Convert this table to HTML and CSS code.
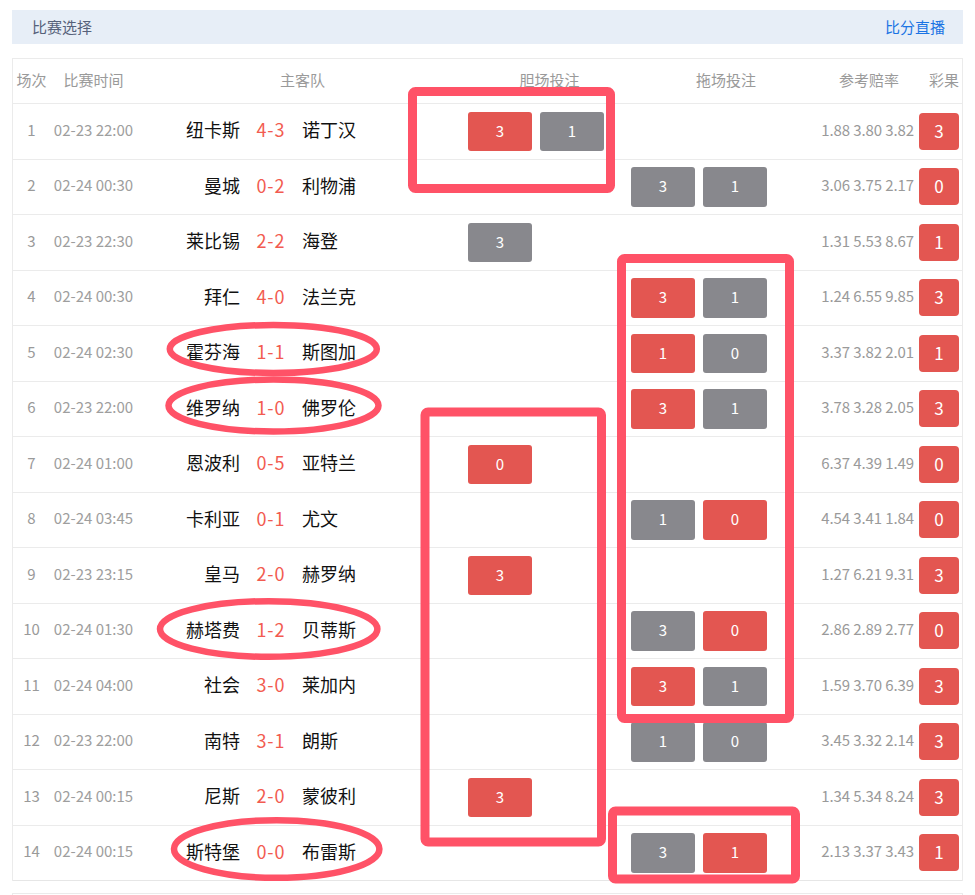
FILE: index.html
```html
<!DOCTYPE html>
<html lang="zh-CN">
<head>
<meta charset="utf-8">
<title>比赛选择</title>
<link rel="stylesheet" href="styles.css">
</head>
<body>
<div class="page">
  <div class="topbar">
    <span class="title">比赛选择</span>
    <a class="live">比分直播</a>
  </div>

  <div class="table">
    <div class="row head">
      <div class="h-no">场次</div>
      <div class="h-time">比赛时间</div>
      <div class="h-teams">主客队</div>
      <div class="h-dan">胆场投注</div>
      <div class="h-tuo">拖场投注</div>
      <div class="h-odds">参考赔率</div>
      <div class="h-res">彩果</div>
    </div>

    <div class="row">
      <div class="c-no">1</div><div class="c-time">02-23 22:00</div>
      <div class="home">纽卡斯</div><div class="score">4-3</div><div class="away">诺丁汉</div>
      <div class="c-dan"><span class="btn red">3</span><span class="btn gray">1</span></div>
      <div class="c-tuo"></div>
      <div class="c-odds">1.88 3.80 3.82</div><div class="c-res"><span class="badge">3</span></div>
    </div>
    <div class="row">
      <div class="c-no">2</div><div class="c-time">02-24 00:30</div>
      <div class="home">曼城</div><div class="score">0-2</div><div class="away">利物浦</div>
      <div class="c-dan"></div>
      <div class="c-tuo"><span class="btn gray">3</span><span class="btn gray">1</span></div>
      <div class="c-odds">3.06 3.75 2.17</div><div class="c-res"><span class="badge">0</span></div>
    </div>
    <div class="row">
      <div class="c-no">3</div><div class="c-time">02-23 22:30</div>
      <div class="home">莱比锡</div><div class="score">2-2</div><div class="away">海登</div>
      <div class="c-dan"><span class="btn gray">3</span></div>
      <div class="c-tuo"></div>
      <div class="c-odds">1.31 5.53 8.67</div><div class="c-res"><span class="badge">1</span></div>
    </div>
    <div class="row">
      <div class="c-no">4</div><div class="c-time">02-24 00:30</div>
      <div class="home">拜仁</div><div class="score">4-0</div><div class="away">法兰克</div>
      <div class="c-dan"></div>
      <div class="c-tuo"><span class="btn red">3</span><span class="btn gray">1</span></div>
      <div class="c-odds">1.24 6.55 9.85</div><div class="c-res"><span class="badge">3</span></div>
    </div>
    <div class="row">
      <div class="c-no">5</div><div class="c-time">02-24 02:30</div>
      <div class="home">霍芬海</div><div class="score">1-1</div><div class="away">斯图加</div>
      <div class="c-dan"></div>
      <div class="c-tuo"><span class="btn red">1</span><span class="btn gray">0</span></div>
      <div class="c-odds">3.37 3.82 2.01</div><div class="c-res"><span class="badge">1</span></div>
    </div>
    <div class="row">
      <div class="c-no">6</div><div class="c-time">02-23 22:00</div>
      <div class="home">维罗纳</div><div class="score">1-0</div><div class="away">佛罗伦</div>
      <div class="c-dan"></div>
      <div class="c-tuo"><span class="btn red">3</span><span class="btn gray">1</span></div>
      <div class="c-odds">3.78 3.28 2.05</div><div class="c-res"><span class="badge">3</span></div>
    </div>
    <div class="row">
      <div class="c-no">7</div><div class="c-time">02-24 01:00</div>
      <div class="home">恩波利</div><div class="score">0-5</div><div class="away">亚特兰</div>
      <div class="c-dan"><span class="btn red">0</span></div>
      <div class="c-tuo"></div>
      <div class="c-odds">6.37 4.39 1.49</div><div class="c-res"><span class="badge">0</span></div>
    </div>
    <div class="row">
      <div class="c-no">8</div><div class="c-time">02-24 03:45</div>
      <div class="home">卡利亚</div><div class="score">0-1</div><div class="away">尤文</div>
      <div class="c-dan"></div>
      <div class="c-tuo"><span class="btn gray">1</span><span class="btn red">0</span></div>
      <div class="c-odds">4.54 3.41 1.84</div><div class="c-res"><span class="badge">0</span></div>
    </div>
    <div class="row">
      <div class="c-no">9</div><div class="c-time">02-23 23:15</div>
      <div class="home">皇马</div><div class="score">2-0</div><div class="away">赫罗纳</div>
      <div class="c-dan"><span class="btn red">3</span></div>
      <div class="c-tuo"></div>
      <div class="c-odds">1.27 6.21 9.31</div><div class="c-res"><span class="badge">3</span></div>
    </div>
    <div class="row">
      <div class="c-no">10</div><div class="c-time">02-24 01:30</div>
      <div class="home">赫塔费</div><div class="score">1-2</div><div class="away">贝蒂斯</div>
      <div class="c-dan"></div>
      <div class="c-tuo"><span class="btn gray">3</span><span class="btn red">0</span></div>
      <div class="c-odds">2.86 2.89 2.77</div><div class="c-res"><span class="badge">0</span></div>
    </div>
    <div class="row">
      <div class="c-no">11</div><div class="c-time">02-24 04:00</div>
      <div class="home">社会</div><div class="score">3-0</div><div class="away">莱加内</div>
      <div class="c-dan"></div>
      <div class="c-tuo"><span class="btn red">3</span><span class="btn gray">1</span></div>
      <div class="c-odds">1.59 3.70 6.39</div><div class="c-res"><span class="badge">3</span></div>
    </div>
    <div class="row">
      <div class="c-no">12</div><div class="c-time">02-23 22:00</div>
      <div class="home">南特</div><div class="score">3-1</div><div class="away">朗斯</div>
      <div class="c-dan"></div>
      <div class="c-tuo"><span class="btn gray">1</span><span class="btn gray">0</span></div>
      <div class="c-odds">3.45 3.32 2.14</div><div class="c-res"><span class="badge">3</span></div>
    </div>
    <div class="row">
      <div class="c-no">13</div><div class="c-time">02-24 00:15</div>
      <div class="home">尼斯</div><div class="score">2-0</div><div class="away">蒙彼利</div>
      <div class="c-dan"><span class="btn red">3</span></div>
      <div class="c-tuo"></div>
      <div class="c-odds">1.34 5.34 8.24</div><div class="c-res"><span class="badge">3</span></div>
    </div>
    <div class="row last">
      <div class="c-no">14</div><div class="c-time">02-24 00:15</div>
      <div class="home">斯特堡</div><div class="score">0-0</div><div class="away">布雷斯</div>
      <div class="c-dan"></div>
      <div class="c-tuo"><span class="btn gray">3</span><span class="btn red">1</span></div>
      <div class="c-odds">2.13 3.37 3.43</div><div class="c-res"><span class="badge">1</span></div>
    </div>
  </div>

  <div class="next"></div>

  <svg class="marks" width="975" height="895" viewBox="0 0 975 895">
    <g fill="none" stroke="#ff5267" stroke-width="9" stroke-linejoin="round">
      <rect x="412.5" y="91.5" width="198" height="97" rx="3"/>
      <rect x="621.5" y="258.5" width="168" height="460" rx="3"/>
      <rect x="425" y="412" width="176.5" height="430" rx="3"/>
      <rect x="612.5" y="811" width="183" height="68" rx="3"/>
    </g>
    <g fill="none" stroke="#ff5267" stroke-width="6.5">
      <ellipse cx="273.3" cy="349" rx="103.5" ry="24"/>
      <ellipse cx="273.5" cy="405.5" rx="105" ry="26"/>
      <ellipse cx="268.7" cy="629" rx="108.7" ry="27.8"/>
      <ellipse cx="276.7" cy="849" rx="102.7" ry="28.8"/>
    </g>
  </svg>
</div>
</body>
</html>
```

FILE: styles.css
```css
html, body {
  margin: 0;
  padding: 0;
  background: #fff;
}

body {
  font-family: "Noto Sans CJK SC", "Noto Sans", sans-serif;
  color: #222;
}

.page {
  position: relative;
  width: 975px;
  height: 895px;
  overflow: hidden;
  padding: 10px 12px 0;
  box-sizing: border-box;
}

.topbar {
  height: 34px;
  background: #e7eef7;
  display: flex;
  align-items: center;
  justify-content: space-between;
  padding: 0 18px 2px 20px;
  box-sizing: border-box;
  font-size: 15px;
  margin-bottom: 14px;
}

.title {
  color: #56617a;
}

.live {
  color: #1b74e4;
  text-decoration: none;
}

.table {
  border: 1px solid #ebebeb;
  border-bottom: none;
}

.row {
  display: grid;
  grid-template-columns: 37px 87px 110px 47px 174px 163px 190px 96px 44px;
  height: 55.5px;
  box-sizing: border-box;
  border-bottom: 1px solid #ebebeb;
  align-items: center;
  font-size: 15px;
}

.row.head {
  height: 45px;
  color: #9a9a9a;
  text-align: center;
  padding-bottom: 4px;
}

.row.last {
  border-bottom-color: #e6e6e6;
}

.h-teams {
  grid-column: 3 / 6;
}

.h-res {
  padding-left: 10px;
}

.c-no,
.c-time,
.home,
.score,
.away,
.c-odds {
  padding-bottom: 4px;
}

.c-no {
  text-align: center;
  color: #9a9a9a;
}

.c-time {
  text-align: center;
  color: #9e9e9e;
}

.home {
  text-align: right;
  padding-right: 7px;
  font-size: 18px;
  color: #111;
  white-space: nowrap;
}

.away {
  text-align: left;
  padding-left: 8px;
  font-size: 18px;
  color: #111;
  white-space: nowrap;
}

.score {
  text-align: center;
  font-size: 18px;
  letter-spacing: 1px;
  text-indent: 1px;
  color: #f25b50;
}

.c-dan,
.c-tuo {
  display: flex;
  gap: 8px;
  align-items: center;
}

.btn {
  width: 64px;
  height: 39.5px;
  border-radius: 3px;
  display: flex;
  align-items: center;
  justify-content: center;
  color: #fff;
  font-size: 15px;
  padding-bottom: 2px;
  box-sizing: border-box;
}

.btn.red {
  background: #e35651;
}

.btn.gray {
  background: #88888d;
}

.c-odds {
  text-align: right;
  padding-right: 3px;
  color: #9a9a9a;
  white-space: nowrap;
  letter-spacing: -0.1px;
}

.c-res {
  display: flex;
  justify-content: center;
}

.badge {
  width: 40px;
  height: 37px;
  border-radius: 4px;
  background: #e35651;
  color: #fff;
  font-size: 17px;
  display: flex;
  align-items: center;
  justify-content: center;
  padding-bottom: 2px;
  box-sizing: border-box;
}

.next {
  margin-top: 12px;
  height: 40px;
  border: 1px solid #ebebeb;
}

.marks {
  position: absolute;
  left: 0;
  top: 0;
  pointer-events: none;
}
```
